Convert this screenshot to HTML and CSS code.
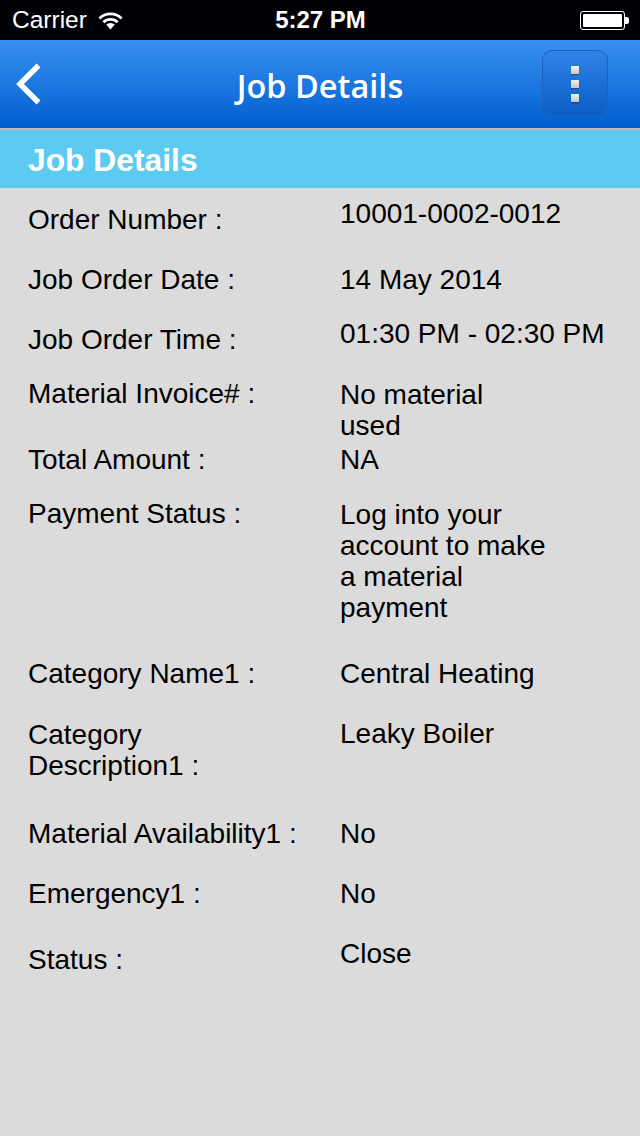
FILE: index.html
```html
<!DOCTYPE html>
<html>
<head>
  <title>Job Details</title>
  <link rel="stylesheet" href="styles.css">
</head>
<body>
  <div class="status-bar">
    <div class="status-left">
      <span>Carrier</span>
      <svg class="wifi" width="25" height="19" viewBox="0 0 25 19">
        <path d="M1.4 7.4 A16 16 0 0 1 23.6 7.4" fill="none" stroke="#fff" stroke-width="2.8"/>
        <path d="M5.4 11.2 A10.2 10.2 0 0 1 19.6 11.2" fill="none" stroke="#fff" stroke-width="2.8"/>
        <path d="M8.2 13.6 A6.4 6.4 0 0 1 16.8 13.6 L12.5 18.5 Z" fill="#fff"/>
      </svg>
    </div>
    <div class="status-time">5:27 PM</div>
    <div class="battery">
      <div class="battery-body"><div class="battery-fill"></div></div>
      <div class="battery-tip"></div>
    </div>
  </div>

  <div class="nav-bar">
    <svg class="back" width="26" height="42" viewBox="0 0 26 42">
      <path d="M23.5 2.5 L5 21 L23.5 39.5" fill="none" stroke="#fff" stroke-width="5.5"/>
    </svg>
    <div class="nav-title">Job Details</div>
    <div class="menu-btn">
      <span class="dot"></span>
      <span class="dot"></span>
      <span class="dot"></span>
    </div>
  </div>

  <div class="section-title">Job Details</div>

  <div class="details">
    <div class="row gap-10">
      <div class="label low">Order Number :</div>
      <div class="value">10001-0002-0012</div>
    </div>
    <div class="row gap-29">
      <div class="label">Job Order Date :</div>
      <div class="value">14 May 2014</div>
    </div>
    <div class="row gap-23">
      <div class="label low">Job Order Time :</div>
      <div class="value">01:30 PM - 02:30 PM</div>
    </div>
    <div class="row gap-23">
      <div class="label">Material Invoice# :</div>
      <div class="value nudge">No material<br>used</div>
    </div>
    <div class="row gap-3">
      <div class="label">Total Amount :</div>
      <div class="value">NA</div>
    </div>
    <div class="row gap-23">
      <div class="label">Payment Status :</div>
      <div class="value nudge">Log into your<br>account to make<br>a material<br>payment</div>
    </div>
    <div class="row gap-35">
      <div class="label">Category Name1 :</div>
      <div class="value">Central Heating</div>
    </div>
    <div class="row gap-29">
      <div class="label nudge">Category<br>Description1 :</div>
      <div class="value">Leaky Boiler</div>
    </div>
    <div class="row gap-37">
      <div class="label">Material Availability1 :</div>
      <div class="value">No</div>
    </div>
    <div class="row gap-29">
      <div class="label">Emergency1 :</div>
      <div class="value">No</div>
    </div>
    <div class="row gap-29">
      <div class="label low">Status :</div>
      <div class="value">Close</div>
    </div>
  </div>
</body>
</html>
```

FILE: styles.css
```css
* {
  box-sizing: border-box;
}

body {
  margin: 0;
  height: 1136px;
  background-color: #dbdbdb;
  color: #000;
  font-family: "Liberation Sans", Arial, sans-serif;
  overflow: hidden;
}

.status-bar {
  display: grid;
  grid-template-columns: 1fr auto 1fr;
  align-items: center;
  height: 40px;
  padding: 0 11px 0 12px;
  background-color: #000105;
  color: #fff;
  font-size: 24.5px;
}

.status-left {
  display: flex;
  align-items: center;
  gap: 11px;
}

.status-time {
  font-weight: bold;
  font-size: 24px;
}

.battery {
  display: flex;
  align-items: center;
  justify-content: flex-end;
}

.battery-body {
  width: 45px;
  height: 19px;
  padding: 2px;
  border: 1px solid #fff;
  border-radius: 3px;
}

.battery-fill {
  height: 100%;
  background-color: #fff;
  border-radius: 1px;
}

.battery-tip {
  width: 4px;
  height: 7px;
  background-color: #fff;
  border-radius: 0 2px 2px 0;
}

.nav-bar {
  display: grid;
  grid-template-columns: 1fr auto 1fr;
  align-items: center;
  height: 88px;
  padding: 0 32px 0 15px;
  background: linear-gradient(to bottom, #388ff0, #005fd0);
}

.nav-title {
  padding: 3px 0 0 17px;
  color: #fff;
  font-family: "Open Sans", sans-serif;
  font-weight: 600;
  font-size: 32.5px;
}

.menu-btn {
  display: flex;
  flex-direction: column;
  align-items: center;
  justify-content: center;
  gap: 6px;
  justify-self: end;
  width: 66px;
  height: 66px;
  margin-top: -2px;
  padding-top: 2px;
  border: 1px solid #1a62bd;
  border-radius: 10px;
  background: linear-gradient(to bottom, #3084e8, #0a5ec4);
}

.dot {
  width: 8px;
  height: 8px;
  background: linear-gradient(to bottom, #f2f2f2, #c8c8c8);
  box-shadow: 0 1px 1px rgba(0, 0, 0, 0.3);
}

.section-title {
  height: 60px;
  padding: 12px 28px 0;
  border-top: 2px solid #bdbdbd;
  background-color: #5ccaf1;
  color: #fff;
  font-size: 31.8px;
  font-weight: bold;
  line-height: 36px;
}

.details {
  padding-left: 28px;
  font-size: 28px;
  line-height: 31px;
}

.row {
  display: grid;
  grid-template-columns: 312px 1fr;
}

.gap-3 { margin-top: 3px; }
.gap-10 { margin-top: 10px; }
.gap-23 { margin-top: 23px; }
.gap-29 { margin-top: 29px; }
.gap-35 { margin-top: 35px; }
.gap-37 { margin-top: 37px; }

.low {
  padding-top: 6px;
}

.nudge {
  padding-top: 1px;
}
```
